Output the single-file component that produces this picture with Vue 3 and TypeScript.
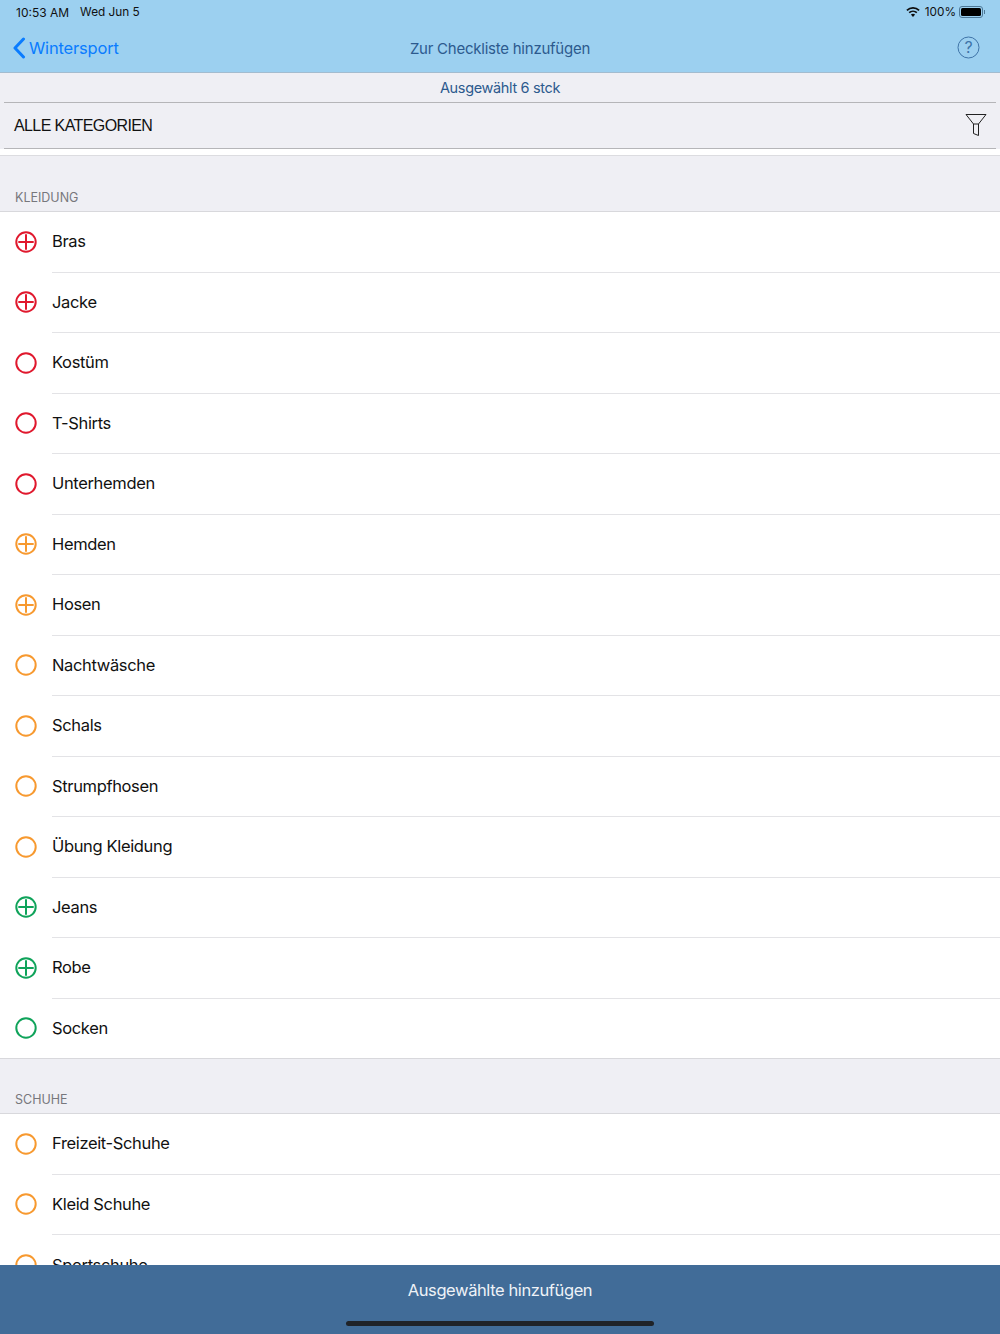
<script setup lang="ts">
type Item = { name: string; color: string; plus?: boolean }
const red = '#e0182d'
const orange = '#f7992f'
const green = '#0fa35a'
const sections: { title: string; items: Item[] }[] = [
  {
    title: 'KLEIDUNG',
    items: [
      { name: 'Bras', color: red, plus: true },
      { name: 'Jacke', color: red, plus: true },
      { name: 'Kostüm', color: red },
      { name: 'T-Shirts', color: red },
      { name: 'Unterhemden', color: red },
      { name: 'Hemden', color: orange, plus: true },
      { name: 'Hosen', color: orange, plus: true },
      { name: 'Nachtwäsche', color: orange },
      { name: 'Schals', color: orange },
      { name: 'Strumpfhosen', color: orange },
      { name: 'Übung Kleidung', color: orange },
      { name: 'Jeans', color: green, plus: true },
      { name: 'Robe', color: green, plus: true },
      { name: 'Socken', color: green },
    ],
  },
  {
    title: 'SCHUHE',
    items: [
      { name: 'Freizeit-Schuhe', color: orange },
      { name: 'Kleid Schuhe', color: orange },
      { name: 'Sportschuhe', color: orange },
    ],
  },
]
</script>

<template>
  <div class="screen">
    <header class="nav">
      <div class="status">
        <span class="time">10:53 AM</span>
        <span class="date">Wed Jun 5</span>
        <span class="spacer"></span>
        <svg class="wifi" width="14" height="10" viewBox="0 0 14 10">
          <path d="M7 10 4.900 7.600a3.100 3.100 0 0 1 4.200 0Z" fill="#0d0d0d" />
          <path d="M3.700 6.300 2.600 5.100a6.600 6.600 0 0 1 8.800 0L10.300 6.300a4.900 4.900 0 0 0-6.600 0Z" fill="#0d0d0d" />
          <path d="M1.500 3.900.3 2.700a10 10 0 0 1 13.400 0l-1.200 1.200a8.300 8.300 0 0 0-11 0Z" fill="#0d0d0d" />
        </svg>
        <span class="pct">100%</span>
        <span class="battery"><span class="battery-fill"></span></span>
        <span class="battery-cap"></span>
      </div>
      <div class="bar">
        <div class="back">
          <svg width="14" height="22" viewBox="0 0 14 22">
            <path d="M11.500 2 3 11l8.500 9" fill="none" stroke="#0a7cff" stroke-width="3" stroke-linecap="round" stroke-linejoin="round" />
          </svg>
          <span>Wintersport</span>
        </div>
        <div class="title">Zur Checkliste hinzufügen</div>
        <svg class="help" width="23" height="23" viewBox="0 0 23 23">
          <circle cx="11.500" cy="11.500" r="10.500" fill="none" stroke="#3f74a8" stroke-width="1" />
          <text x="11.500" y="17" text-anchor="middle" class="help-q">?</text>
        </svg>
      </div>
    </header>

    <section class="filter">
      <div class="selected">Ausgewählt 6 stck</div>
      <div class="category">
        <span>ALLE KATEGORIEN</span>
        <svg width="22" height="24" viewBox="0 0 22 24">
          <path d="M1 1.500h20l-7.500 9.500v11.500l-5-2V11Z" fill="none" stroke="#222" stroke-width="1" stroke-linejoin="miter" />
          <path d="M8.500 11h5" stroke="#222" stroke-width="1" />
        </svg>
      </div>
    </section>

    <main class="list">
      <div class="gap"></div>
      <section v-for="s in sections" :key="s.title">
        <div class="sec-head">{{ s.title }}</div>
        <div class="rows">
          <div v-for="it in s.items" :key="it.name" class="row">
            <svg class="mark" width="24" height="24" viewBox="0 0 24 24">
              <circle cx="12" cy="12" r="9.700" fill="none" :stroke="it.color" stroke-width="2" />
              <path v-if="it.plus" d="M12 4.300v15.400M4.300 12h15.400" fill="none" :stroke="it.color" stroke-width="2" />
            </svg>
            <div class="label"><span>{{ it.name }}</span></div>
          </div>
        </div>
      </section>
    </main>

    <footer class="foot">
      <span class="foot-text">Ausgewählte hinzufügen</span>
      <span class="home"></span>
    </footer>
  </div>
</template>

<style>
html, body { margin: 0; padding: 0; background: #fff; }
</style>

<style scoped>
.screen {
  width: 1000px;
  height: 1334px;
  display: flex;
  flex-direction: column;
  overflow: hidden;
  font-family: Inter, "Liberation Sans", sans-serif;
  background: #fff;
  color: #111;
}
.nav {
  height: 72px;
  flex: none;
  background: #9cd0f0;
  border-bottom: 1px solid #a3bccf;
  display: flex;
  flex-direction: column;
}
.status {
  height: 24px;
  display: flex;
  align-items: center;
  padding: 0 16px;
  font-size: 12px;
  color: #111;
}
.time { margin-right: 11px; }
.date { font-size: 11.800px; }
.spacer { flex: 1; }
.wifi { margin-right: 5px; }
.pct { margin-right: 3px; font-size: 11.800px; }
.battery {
  width: 24px;
  height: 12px;
  box-sizing: border-box;
  border: 1px solid #4d7897;
  border-radius: 3px;
  padding: 1px;
  display: flex;
}
.battery-fill { flex: 1; background: #000; border-radius: 1.500px; }
.battery-cap { width: 1.500px; height: 4px; background: #4d7897; margin-right: -1px; margin-left: 0.500px; }
.bar {
  flex: 1;
  display: flex;
  align-items: center;
  justify-content: space-between;
  padding: 0 20px 0 12px;
  position: relative;
}
.back {
  display: flex;
  align-items: center;
  gap: 3px;
  color: #0a7cff;
  font-size: 16.500px;
  letter-spacing: -0.180px;
}
.title {
  position: absolute;
  left: 0;
  right: 0;
  text-align: center;
  color: #2c5a8e;
  font-size: 15px;
  letter-spacing: -0.240px;
}
.help-q { font-size: 16px; fill: #3f74a8; font-family: Inter, sans-serif; }
.help { margin-top: -1px; }
.filter {
  flex: none;
  background: #efeff4;
  padding: 0 4px;
}
.selected {
  height: 29px;
  line-height: 30px;
  text-align: center;
  color: #2c5a8e;
  font-size: 14.500px;
  letter-spacing: -0.350px;
  border-bottom: 1px solid #b5b5b8;
}
.category {
  height: 45px;
  display: flex;
  align-items: center;
  justify-content: space-between;
  padding: 0 9px 0 10px;
  font-family: "Liberation Sans", Arial, sans-serif;
  font-size: 16px;
  letter-spacing: -0.600px;
  line-height: 43px;
  color: #111;
  border-bottom: 1px solid #b5b5b8;
}
.category svg { margin-top: -1px; }
.list {
  flex: 1;
  min-height: 0;
  overflow: hidden;
  background: #efeff4;
}
.gap {
  height: 6px;
  background: #fff;
  border-bottom: 1px solid #dcdce0;
}
.sec-head {
  height: 55px;
  box-sizing: border-box;
  padding: 33px 0 0 15px;
  font-size: 12.500px;
  line-height: 16px;
  color: #77777c;
  border-bottom: 1px solid #d8d8dc;
}
.list section:first-of-type .sec-head { height: 56px; padding-top: 34px; }
.rows {
  background: #fff;
}
.row {
  height: 60.500px;
  display: flex;
  align-items: stretch;
  padding-left: 14px;
  box-sizing: border-box;
}
.list section:first-of-type .row:last-child {
  border-bottom: 1px solid #d8d8dc;
}
.mark { flex: none; align-self: center; margin-top: -1px; }
.label {
  flex: 1;
  margin-left: 14px;
  display: flex;
  align-items: center;
  font-size: 16.500px;
  letter-spacing: -0.350px;
  color: #111;
  border-bottom: 1px solid #e3e3e6;
  padding-bottom: 1px;
}
.row:last-child .label { border-bottom: none; }
.foot {
  flex: none;
  height: 69px;
  background: #416c98;
  position: relative;
  display: flex;
  justify-content: center;
  color: #eef2f7;
  font-size: 16.500px;
  letter-spacing: -0.400px;
}
.foot-text { margin-top: 15px; line-height: 20px; }
.home {
  position: absolute;
  left: 346px;
  bottom: 8px;
  width: 308px;
  height: 5px;
  border-radius: 3px;
  background: #1f2328;
}
</style>
